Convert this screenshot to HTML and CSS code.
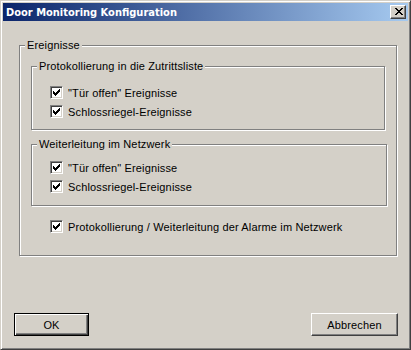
FILE: index.html
```html
<!DOCTYPE html>
<html lang="de">
<head>
    <meta charset="UTF-8">
    <title>Door Monitoring Konfiguration</title>
    <link rel="stylesheet" href="styles.css">
</head>
<body>

<div class="window">
    <div class="titlebar">
        <span class="title">Door Monitoring Konfiguration</span>
        <span class="close-btn">
            <svg width="8" height="7" viewBox="0 0 8 7" shape-rendering="crispEdges">
                <path d="M0 0h2v1H0z M6 0h2v1H6z M1 1h2v1H1z M5 1h2v1H5z M2 2h4v1H2z M3 3h2v1H3z M2 4h4v1H2z M1 5h2v1H1z M5 5h2v1H5z M0 6h2v1H0z M6 6h2v1H6z" fill="#000"/>
            </svg>
        </span>
    </div>

    <div class="content">
        <div class="group outer">
            <span class="legend">Ereignisse</span>

            <div class="group inner inner-1">
                <span class="legend">Protokollierung in die Zutrittsliste</span>
                <div class="rows">
                    <div class="row"><span class="check"><svg width="7" height="7" viewBox="0 0 7 7" shape-rendering="crispEdges"><path d="M0 2h1v3H0z M1 3h1v3H1z M2 4h1v3H2z M3 3h1v3H3z M4 2h1v3H4z M5 1h1v3H5z M6 0h1v3H6z" fill="#000"/></svg></span>"Tür offen" Ereignisse</div>
                    <div class="row"><span class="check"><svg width="7" height="7" viewBox="0 0 7 7" shape-rendering="crispEdges"><path d="M0 2h1v3H0z M1 3h1v3H1z M2 4h1v3H2z M3 3h1v3H3z M4 2h1v3H4z M5 1h1v3H5z M6 0h1v3H6z" fill="#000"/></svg></span>Schlossriegel-Ereignisse</div>
                </div>
            </div>

            <div class="group inner inner-2">
                <span class="legend">Weiterleitung im Netzwerk</span>
                <div class="rows">
                    <div class="row"><span class="check"><svg width="7" height="7" viewBox="0 0 7 7" shape-rendering="crispEdges"><path d="M0 2h1v3H0z M1 3h1v3H1z M2 4h1v3H2z M3 3h1v3H3z M4 2h1v3H4z M5 1h1v3H5z M6 0h1v3H6z" fill="#000"/></svg></span>"Tür offen" Ereignisse</div>
                    <div class="row"><span class="check"><svg width="7" height="7" viewBox="0 0 7 7" shape-rendering="crispEdges"><path d="M0 2h1v3H0z M1 3h1v3H1z M2 4h1v3H2z M3 3h1v3H3z M4 2h1v3H4z M5 1h1v3H5z M6 0h1v3H6z" fill="#000"/></svg></span>Schlossriegel-Ereignisse</div>
                </div>
            </div>

            <div class="row alarm-row"><span class="check"><svg width="7" height="7" viewBox="0 0 7 7" shape-rendering="crispEdges"><path d="M0 2h1v3H0z M1 3h1v3H1z M2 4h1v3H2z M3 3h1v3H3z M4 2h1v3H4z M5 1h1v3H5z M6 0h1v3H6z" fill="#000"/></svg></span>Protokollierung / Weiterleitung der Alarme im Netzwerk</div>
        </div>

        <div class="buttons">
            <button class="btn btn-default">OK</button>
            <button class="btn btn-cancel">Abbrechen</button>
        </div>
    </div>
</div>

</body>
</html>
```

FILE: styles.css
```css
body {
    margin: 0;
    font-family: "Liberation Sans", Arial, sans-serif;
    font-size: 11px;
    letter-spacing: 0.15px;
    color: #000;
}
.window {
    width: 411px;
    height: 350px;
    box-sizing: border-box;
    background: #d4d0c8;
    border: 1px solid;
    border-color: #d4d0c8 #404040 #404040 #d4d0c8;
    box-shadow: inset 1px 1px 0 #fff, inset -1px -1px 0 #808080;
    padding: 2px;
    display: flex;
    flex-direction: column;
}
.titlebar {
    height: 18px;
    display: flex;
    align-items: center;
    justify-content: space-between;
    padding: 0 2px 0 3px;
    background: linear-gradient(to right, #0a246a, #a6caf0);
}
.title {
    color: #fff;
    font-family: "DejaVu Sans Condensed", "Liberation Sans", sans-serif;
    font-weight: bold;
    font-size: 11px;
    line-height: 13px;
    letter-spacing: 0;
}
.close-btn {
    width: 16px;
    height: 14px;
    box-sizing: border-box;
    background: #d4d0c8;
    border: 1px solid;
    border-color: #fff #404040 #404040 #fff;
    box-shadow: inset -1px -1px 0 #808080;
    display: flex;
    justify-content: center;
    align-items: flex-start;
    padding-top: 2px;
    padding-left: 1px;
}
.close-btn svg {
    display: block;
}
.content {
    flex: 1;
    display: flex;
    flex-direction: column;
}
.group {
    box-sizing: border-box;
    border: 1px solid #808080;
    box-shadow: 1px 1px 0 #fff, inset 1px 1px 0 #fff;
    display: flex;
    flex-direction: column;
    align-items: flex-start;
}
.legend {
    display: block;
    line-height: 13px;
    margin: -7px 0 -6px 5px;
    padding: 0 2px;
    background: #d4d0c8;
}
.outer {
    margin: 24px 0 0 16px;
    width: 378px;
    height: 211px;
}
.inner {
    margin-left: 11px;
}
.inner-1 {
    margin-top: 20px;
    width: 354px;
    height: 64px;
}
.inner-2 {
    margin-top: 14px;
    width: 356px;
    height: 62px;
}
.rows {
    padding-left: 18px;
}
.inner-1 .rows {
    padding-top: 16px;
}
.inner-2 .rows {
    padding-top: 13px;
}
.row {
    height: 19px;
    display: flex;
    align-items: center;
}
.alarm-row {
    margin: 11px 0 0 30px;
}
.check {
    width: 13px;
    height: 13px;
    box-sizing: border-box;
    background: #fff;
    border: 1px solid;
    border-color: #808080 #fff #fff #808080;
    box-shadow: inset 1px 1px 0 #404040, inset -1px -1px 0 #d4d0c8;
    padding: 2px;
    margin-right: 5px;
}
.check svg {
    display: block;
}
.buttons {
    display: flex;
    justify-content: space-between;
    margin: 57px 10px 0 11px;
}
.btn {
    height: 23px;
    box-sizing: border-box;
    font-family: "Liberation Sans", Arial, sans-serif;
    font-size: 11px;
    letter-spacing: 0.15px;
    color: #000;
    background: #d4d0c8;
    padding: 0;
}
.btn-default {
    width: 75px;
    border: 1px solid #000;
    box-shadow: inset 1px 1px 0 #fff, inset -1px -1px 0 #404040, inset -2px -2px 0 #808080;
}
.btn-cancel {
    width: 87px;
    border: 1px solid;
    border-color: #fff #404040 #404040 #fff;
    box-shadow: inset -1px -1px 0 #808080;
}
```
